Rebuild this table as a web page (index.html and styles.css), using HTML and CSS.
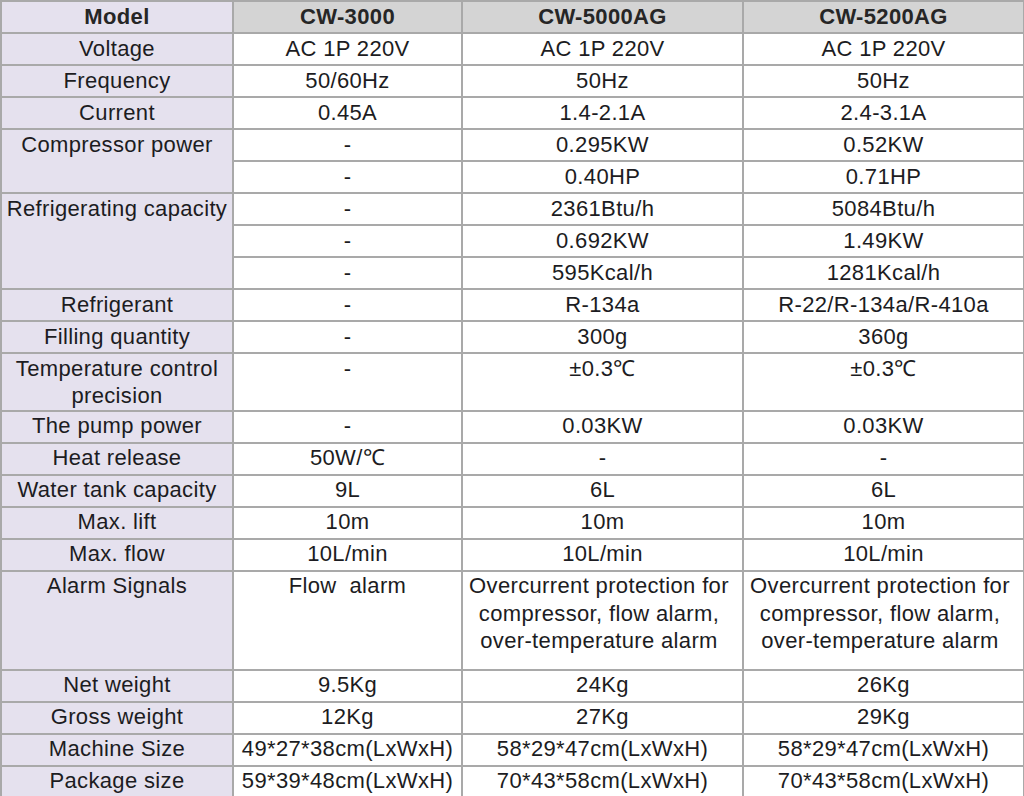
FILE: index.html
```html
<!DOCTYPE html>
<html>
<head>
<meta charset="utf-8">
<link rel="stylesheet" href="styles.css">
</head>
<body>
<table class="spec">
<colgroup>
<col class="c1"><col class="c2"><col class="c3"><col class="c4">
</colgroup>
<thead>
<tr><th class="lbl">Model</th><th>CW-3000</th><th>CW-5000AG</th><th>CW-5200AG</th></tr>
</thead>
<tbody>
<tr><td class="lbl">Voltage</td><td>AC 1P 220V</td><td>AC 1P 220V</td><td>AC 1P 220V</td></tr>
<tr><td class="lbl">Frequency</td><td>50/60Hz</td><td>50Hz</td><td>50Hz</td></tr>
<tr><td class="lbl">Current</td><td>0.45A</td><td>1.4-2.1A</td><td>2.4-3.1A</td></tr>
<tr><td class="lbl" rowspan="2">Compressor power</td><td>-</td><td>0.295KW</td><td>0.52KW</td></tr>
<tr><td>-</td><td>0.40HP</td><td>0.71HP</td></tr>
<tr><td class="lbl" rowspan="3">Refrigerating capacity</td><td>-</td><td>2361Btu/h</td><td>5084Btu/h</td></tr>
<tr><td>-</td><td>0.692KW</td><td>1.49KW</td></tr>
<tr><td>-</td><td>595Kcal/h</td><td>1281Kcal/h</td></tr>
<tr><td class="lbl">Refrigerant</td><td>-</td><td>R-134a</td><td>R-22/R-134a/R-410a</td></tr>
<tr><td class="lbl">Filling quantity</td><td>-</td><td>300g</td><td>360g</td></tr>
<tr><td class="lbl">Temperature control precision</td><td>-</td><td>±0.3℃</td><td>±0.3℃</td></tr>
<tr><td class="lbl">The pump power</td><td>-</td><td>0.03KW</td><td>0.03KW</td></tr>
<tr><td class="lbl">Heat release</td><td>50W/℃</td><td>-</td><td>-</td></tr>
<tr><td class="lbl">Water tank capacity</td><td>9L</td><td>6L</td><td>6L</td></tr>
<tr><td class="lbl">Max. lift</td><td>10m</td><td>10m</td><td>10m</td></tr>
<tr><td class="lbl">Max. flow</td><td>10L/min</td><td>10L/min</td><td>10L/min</td></tr>
<tr class="tall"><td class="lbl">Alarm Signals</td><td>Flow&nbsp; alarm</td><td class="wrap">Overcurrent protection for compressor, flow alarm, over-temperature alarm</td><td class="wrap">Overcurrent protection for compressor, flow alarm, over-temperature alarm</td></tr>
<tr><td class="lbl">Net weight</td><td>9.5Kg</td><td>24Kg</td><td>26Kg</td></tr>
<tr><td class="lbl">Gross weight</td><td>12Kg</td><td>27Kg</td><td>29Kg</td></tr>
<tr><td class="lbl">Machine Size</td><td>49*27*38cm(LxWxH)</td><td>58*29*47cm(LxWxH)</td><td>58*29*47cm(LxWxH)</td></tr>
<tr><td class="lbl">Package size</td><td>59*39*48cm(LxWxH)</td><td>70*43*58cm(LxWxH)</td><td>70*43*58cm(LxWxH)</td></tr>
</tbody>
</table>
</body>
</html>
```
FILE: styles.css
```css
html, body {
  margin: 0;
  padding: 0;
  background: #ffffff;
}
.spec {
  width: 1023px;
  table-layout: fixed;
  border-collapse: collapse;
  font-family: "Liberation Sans", Arial, sans-serif;
  font-size: 22px;
  letter-spacing: 0.35px;
  color: #1c1c22;
}
.c1 { width: 232px; }
.c2 { width: 229px; }
.c3 { width: 281px; }
.c4 { width: 281px; }
.spec th, .spec td {
  border: 2px solid #a9a9a9;
  padding: 0.5px 1px 0;
  line-height: 27.5px;
  text-align: center;
  vertical-align: top;
  height: 29.5px;
}
.spec th {
  background: #d4d4d4;
  font-weight: bold;
  color: #262626;
}
.spec .lbl {
  background: #e5e1ee;
}
.spec td.wrap {
  padding-right: 8px;
}
.spec tr.tall td {
  height: 96.5px;
}
```
